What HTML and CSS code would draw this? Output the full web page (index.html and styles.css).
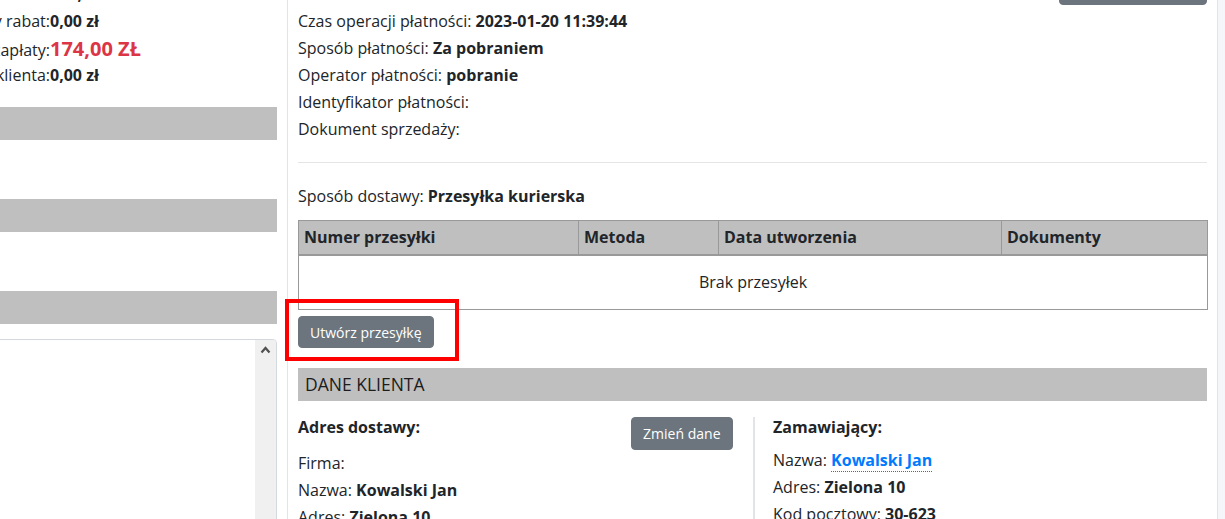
FILE: index.html
```html
<!DOCTYPE html>
<html lang="pl">
<head>
<meta charset="utf-8">
<title>Zamówienie</title>
<link rel="stylesheet" href="styles.css">
</head>
<body>
<div class="page">
  <aside class="left">
    <div class="summary">
      <div class="sum-row"><span class="sum-label">Wartość zamówienia:</span><b>174,00 zł</b></div>
      <div class="sum-row"><span class="sum-label">Naliczony rabat:</span><b>0,00 zł</b></div>
      <div class="sum-row"><span class="sum-label">Do zapłaty:</span><b class="total">174,00 ZŁ</b></div>
      <div class="sum-row"><span class="sum-label">Saldo klienta:</span><b>0,00 zł</b></div>
    </div>
    <div class="bar bar-first"></div>
    <div class="bar bar-next"></div>
    <div class="bar bar-next"></div>
    <div class="box">
      <div class="box-body"></div>
      <div class="scrollbar">
        <svg class="chev" width="11" height="8" viewBox="0 0 11 8"><polyline points="1.5,6.5 5.5,2 9.5,6.5" fill="none" stroke="#505050" stroke-width="2.2"/></svg>
      </div>
    </div>
  </aside>

  <main class="right">
    <div class="top-actions"><button class="btn btn-top">Zmień płatność</button></div>
    <div class="info">
      <div class="line">Czas operacji płatności: <b>2023-01-20 11:39:44</b></div>
      <div class="line">Sposób płatności: <b>Za pobraniem</b></div>
      <div class="line">Operator płatności: <b>pobranie</b></div>
      <div class="line">Identyfikator płatności:</div>
      <div class="line">Dokument sprzedaży:</div>
    </div>
    <hr class="sep">
    <div class="line">Sposób dostawy: <b>Przesyłka kurierska</b></div>
    <table class="ship">
      <colgroup>
        <col class="c1"><col class="c2"><col class="c3"><col class="c4">
      </colgroup>
      <thead>
        <tr><th>Numer przesyłki</th><th>Metoda</th><th>Data utworzenia</th><th>Dokumenty</th></tr>
      </thead>
      <tbody>
        <tr><td colspan="4" class="empty">Brak przesyłek</td></tr>
      </tbody>
    </table>
    <button class="btn btn-create">Utwórz przesyłkę</button>
    <div class="section-bar">DANE KLIENTA</div>
    <div class="client">
      <div class="client-col client-left">
        <div class="client-head">
          <div class="heading">Adres dostawy:</div>
          <button class="btn">Zmień dane</button>
        </div>
        <div class="line">Firma:</div>
        <div class="line">Nazwa: <b>Kowalski Jan</b></div>
        <div class="line">Adres: <b>Zielona 10</b></div>
      </div>
      <div class="client-col client-right">
        <div class="heading heading-right">Zamawiający:</div>
        <div class="line">Nazwa: <a class="link" href="#">Kowalski Jan</a></div>
        <div class="line">Adres: <b>Zielona 10</b></div>
        <div class="line">Kod pocztowy: <b>30-623</b></div>
      </div>
    </div>
  </main>

  <div class="edge"></div>
  <div class="highlight"></div>
</div>
</body>
</html>
```

FILE: styles.css
```css
* { box-sizing: border-box; }
html, body { margin: 0; padding: 0; background: #fff; }
body {
  font-family: "Open Sans", "Liberation Sans", sans-serif;
  font-size: 16px;
  color: #212529;
}
.page {
  position: relative;
  display: flex;
  width: 1225px;
  height: 519px;
  overflow: hidden;
}
b { font-weight: 700; }

/* left column */
.left {
  width: 288px;
  flex: 0 0 288px;
  padding-right: 10px;
  border-right: 1px solid #e4e4e4;
}
.summary { margin-top: -19px; }
.sum-row { display: flex; align-items: baseline; line-height: 27px; height: 27px; }
.sum-label { width: 250px; margin-left: -200px; text-align: right; flex: 0 0 250px; }
.total { color: #dc3545; font-size: 20px; }
.bar { height: 33px; background: #bfbfbf; margin-left: -10px; }
.bar-first { margin-top: 18px; }
.bar-next { margin-top: 59px; }
.box {
  margin-top: 15px;
  margin-left: -10px;
  height: 260px;
  display: flex;
  border: 1px solid #d4d9e0;
  border-top-right-radius: 4px;
  overflow: hidden;
}
.box-body { flex: 1; background: #fff; }
.scrollbar { width: 21px; background: #f0f0f0; display: flex; justify-content: center; padding-top: 6px; }
.chev { display: block; }

/* right column */
.right {
  width: 929px;
  flex: 0 0 929px;
  padding: 0 10px;
}
.top-actions { display: flex; justify-content: flex-end; margin-top: -28px; }
.btn {
  font-family: "Open Sans", "Liberation Sans", sans-serif;
  font-size: 14px;
  line-height: 21px;
  padding: 5px 11px;
  border: 1px solid #6c757d;
  border-radius: 4px;
  background: #6c757d;
  color: #fff;
}
.btn-top { width: 148px; height: 33px; }
.info { margin-top: 3px; }
.line { line-height: 27px; }
.sep { border: 0; border-top: 1px solid #e5e5e5; margin: 19px 0 20px; height: 0; }

.ship {
  margin-top: 10px;
  width: 909px;
  border-collapse: collapse;
  table-layout: fixed;
  border: 1px solid #999;
}
.c1 { width: 280px; }
.c2 { width: 140px; }
.c3 { width: 283px; }
.c4 { width: 206px; }
.ship th {
  background: #bfbfbf;
  text-align: left;
  font-weight: 700;
  line-height: 25px;
  padding: 4px 6px 4px 5px;
  border: 1px solid #999;
  border-bottom: 2px solid #999;
}
.ship td.empty {
  text-align: center;
  line-height: 27px;
  padding: 13px 6px;
}
.btn-create { margin-top: 6px; height: 32px; padding-top: 4px; padding-bottom: 4px; display: block; }

.section-bar {
  margin-top: 20px;
  height: 33px;
  line-height: 33px;
  background: #bfbfbf;
  padding-left: 7px;
  font-size: 17.5px;
  color: #1c1c1c;
}
.client { display: flex; margin-top: 16px; }
.client-col { width: 454.5px; flex: 0 0 454.5px; }
.client-left { padding-right: 20px; }
.client-right { border-left: 2px solid #e2e4e7; padding-left: 18.5px; height: 130px; }
.client-head { display: flex; justify-content: space-between; align-items: flex-start; }
.heading { font-weight: 700; line-height: 21px; }
.heading-right { margin-bottom: 9px; }
.client-head .btn { height: 33px; }
.link {
  color: #007bff;
  font-weight: 700;
  text-decoration: none;
  border-bottom: 1px dotted #007bff;
}

/* far right */
.edge {
  flex: 1;
  border-left: 1px solid #e1e5ea;
  background: #f4f6fa;
}

.highlight {
  position: absolute;
  left: 285px;
  top: 299px;
  width: 174px;
  height: 62px;
  border: 4px solid #ff0000;
}
```
